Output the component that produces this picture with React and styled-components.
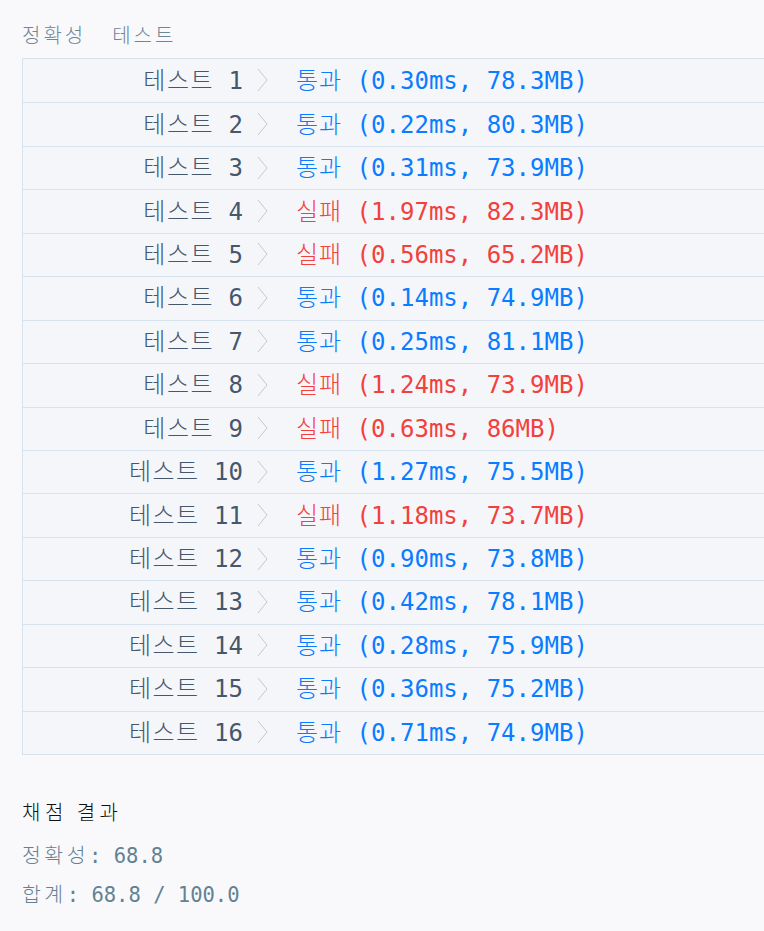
import styled, { createGlobalStyle } from "styled-components";

const GlobalStyle = createGlobalStyle`
  html, body {
    margin: 0;
    padding: 0;
    background: #f9f9fc;
    overflow: hidden;
  }
  body {
    font-family: "DejaVu Sans Mono", "Noto Sans CJK KR", monospace;
  }
`;

const Page = styled.div`
  padding: 22px 0 0 22px;
  width: 742px;
  height: 909px;
`;

// hangul is drawn a little wider and lighter than the mono digits
const Ko = styled.span`
  font-family: "Noto Sans CJK KR", sans-serif;
  font-weight: 300;
  letter-spacing: ${(p) => p.$ls || "1px"};
`;

const Heading = styled.div`
  display: flex;
  gap: 26px;
  font-size: 20px;
  line-height: 26px;
  color: #6f8695;
  margin-bottom: 10px;
`;

const Table = styled.div`
  width: 780px;
  border: 1px solid #d6e2ee;
  border-right: none;
  background: #f5f6fa;
`;

const Row = styled.div`
  display: grid;
  grid-template-columns: 220px 36px 1fr;
  align-items: center;
  height: 43.44px;
  box-sizing: border-box;
  padding-bottom: 5px;
  border-top: ${(p) => (p.$first ? "none" : "1px solid #d6e2ee")};
  font-size: 24px;
`;

const Label = styled.div`
  text-align: right;
  color: #44576d;
`;

const Chevron = styled.svg`
  margin-left: 14px;
  margin-top: 4px;
`;

const Result = styled.div`
  padding-left: 17px;
  color: ${(p) => (p.$pass ? "#0a7cff" : "#f2403c")};
  white-space: nowrap;
`;

const Summary = styled.div`
  margin-top: 44px;
  display: flex;
  flex-direction: column;
`;

const SummaryTitle = styled.div`
  font-size: 20px;
  line-height: 26px;
  color: #111;
  margin-bottom: 15px;
`;

const SummaryLine = styled.div`
  font-size: 20.5px;
  line-height: 26px;
  color: #628293;
  margin-bottom: 11px;
`;

const rows = [
  [true, "0.30ms, 78.3MB"],
  [true, "0.22ms, 80.3MB"],
  [true, "0.31ms, 73.9MB"],
  [false, "1.97ms, 82.3MB"],
  [false, "0.56ms, 65.2MB"],
  [true, "0.14ms, 74.9MB"],
  [true, "0.25ms, 81.1MB"],
  [false, "1.24ms, 73.9MB"],
  [false, "0.63ms, 86MB"],
  [true, "1.27ms, 75.5MB"],
  [false, "1.18ms, 73.7MB"],
  [true, "0.90ms, 73.8MB"],
  [true, "0.42ms, 78.1MB"],
  [true, "0.28ms, 75.9MB"],
  [true, "0.36ms, 75.2MB"],
  [true, "0.71ms, 74.9MB"],
];

const App = () => {
  return (
    <Page>
      <GlobalStyle />
      <Heading>
        <Ko $ls="3px">정확성</Ko>
        <Ko $ls="3px">테스트</Ko>
      </Heading>
      <Table>
        {rows.map(([pass, info], i) => (
          <Row key={i} $first={i === 0}>
            <Label>
              <Ko $ls="1.5px">테스트</Ko> {i + 1}
            </Label>
            <Chevron width="12" height="24" viewBox="0 0 12 24">
              <polyline
                points="1,1 10,12 1,23"
                fill="none"
                stroke="#c4c8cd"
                strokeWidth="1"
              />
            </Chevron>
            <Result $pass={pass}>
              <Ko $ls="1px">{pass ? "통과" : "실패"}</Ko> ({info})
            </Result>
          </Row>
        ))}
      </Table>
      <Summary>
        <SummaryTitle>
          <Ko $ls="4.5px">채점 결과</Ko>
        </SummaryTitle>
        <SummaryLine>
          <Ko $ls="3.5px">정확성</Ko>: 68.8
        </SummaryLine>
        <SummaryLine>
          <Ko $ls="3.5px">합계</Ko>: 68.8 / 100.0
        </SummaryLine>
      </Summary>
    </Page>
  );
};

export default App;
